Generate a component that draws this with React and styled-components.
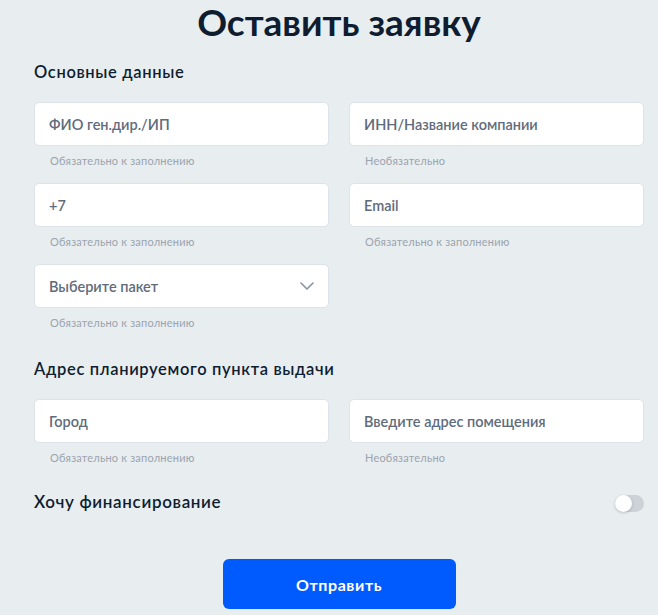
import React, { useState } from 'react'
import styled, { createGlobalStyle } from 'styled-components'

const GlobalStyle = createGlobalStyle`
  html, body {
    margin: 0;
    padding: 0;
    background: #e8edf0;
  }
  body {
    font-family: "Lato", "Open Sans", sans-serif;
    color: #0f1d31;
  }
`

const Page = styled.div`
  width: 658px;
  height: 615px;
  overflow: hidden;
  box-sizing: border-box;
  padding: 0 14px 0 34px;
`

const Title = styled.h1`
  margin: 0;
  font-size: 37px;
  line-height: 44px;
  font-weight: 700;
  text-align: center;
  color: #0f1d31;
`

const SectionTitle = styled.h3`
  margin: ${p => p.$top}px 0 20px;
  font-size: 16.5px;
  line-height: 20px;
  font-weight: 600;
  letter-spacing: 0.65px;
  color: #0f1d31;
`

const Grid = styled.div`
  display: grid;
  grid-template-columns: 1fr 1fr;
  column-gap: 20px;
  row-gap: 16px;
`

const Field = styled.div`
  display: flex;
  flex-direction: column;
`

const InputBox = styled.div`
  height: 44px;
  box-sizing: border-box;
  background: #fff;
  border: 1px solid #dde3e8;
  border-radius: 5px;
  display: flex;
  align-items: center;
  padding: 0 14px;
`

const Input = styled.input`
  border: none;
  outline: none;
  background: transparent;
  width: 100%;
  font-family: inherit;
  font-size: 14.5px;
  font-weight: 600;
  color: #0f1d31;
  padding: 0;

  &::placeholder {
    color: #606b7b;
  }
`

const SelectText = styled.span`
  flex: 1;
  font-size: 14.5px;
  font-weight: 600;
  color: #606b7b;
`

const Hint = styled.span`
  margin-top: 8px;
  padding-left: 16px;
  font-size: 11px;
  line-height: 13px;
  letter-spacing: 0.2px;
  color: #9ba4ae;
`

const SwitchRow = styled.div`
  margin-top: 27px;
  display: flex;
  align-items: center;
  justify-content: space-between;
  font-size: 17px;
  line-height: 20px;
  font-weight: 600;
  letter-spacing: 0.65px;
`

const SwitchTrack = styled.button`
  position: relative;
  width: 29px;
  height: 17px;
  border: none;
  padding: 0;
  border-radius: 9px;
  background: ${p => (p.$on ? '#005bff' : '#cdd2d8')};
  cursor: pointer;
  margin-top: 4px;
`

const SwitchKnob = styled.span`
  position: absolute;
  top: 0;
  left: ${p => (p.$on ? '12px' : '0')};
  width: 17px;
  height: 17px;
  border-radius: 50%;
  background: #fff;
  box-shadow: 0 1px 3px rgba(0, 0, 0, 0.2);
`

const Actions = styled.div`
  display: flex;
  justify-content: center;
  margin-top: 47px;
`

const SubmitButton = styled.button`
  width: 233px;
  height: 50px;
  border: none;
  border-radius: 6px;
  background: #005bff;
  color: #fff;
  font-family: inherit;
  font-size: 16px;
  font-weight: 700;
  letter-spacing: 0.6px;
  cursor: pointer;
`

const TextField = ({ placeholder, hint }) => (
  <Field>
    <InputBox>
      <Input placeholder={placeholder} />
    </InputBox>
    <Hint>{hint}</Hint>
  </Field>
)

const REQUIRED = 'Обязательно к заполнению'
const OPTIONAL = 'Необязательно'

export default function App() {
  const [funding, setFunding] = useState(false)

  return (
    <Page>
      <GlobalStyle />
      <Title>Оставить заявку</Title>

      <SectionTitle $top={18}>Основные данные</SectionTitle>
      <Grid>
        <TextField placeholder="ФИО ген.дир./ИП" hint={REQUIRED} />
        <TextField placeholder="ИНН/Название компании" hint={OPTIONAL} />
        <TextField placeholder="+7" hint={REQUIRED} />
        <TextField placeholder="Email" hint={REQUIRED} />
        <Field>
          <InputBox>
            <SelectText>Выберите пакет</SelectText>
            <svg width="14" height="8" viewBox="0 0 14 8" fill="none">
              <path d="M1 1l6 6 6-6" stroke="#8a94a0" strokeWidth="1.6" strokeLinecap="round" strokeLinejoin="round" />
            </svg>
          </InputBox>
          <Hint>{REQUIRED}</Hint>
        </Field>
      </Grid>

      <SectionTitle $top={30}>Адрес планируемого пункта выдачи</SectionTitle>
      <Grid>
        <TextField placeholder="Город" hint={REQUIRED} />
        <TextField placeholder="Введите адрес помещения" hint={OPTIONAL} />
      </Grid>

      <SwitchRow>
        <span>Хочу финансирование</span>
        <SwitchTrack $on={funding} onClick={() => setFunding(!funding)}>
          <SwitchKnob $on={funding} />
        </SwitchTrack>
      </SwitchRow>

      <Actions>
        <SubmitButton>Отправить</SubmitButton>
      </Actions>
    </Page>
  )
}
